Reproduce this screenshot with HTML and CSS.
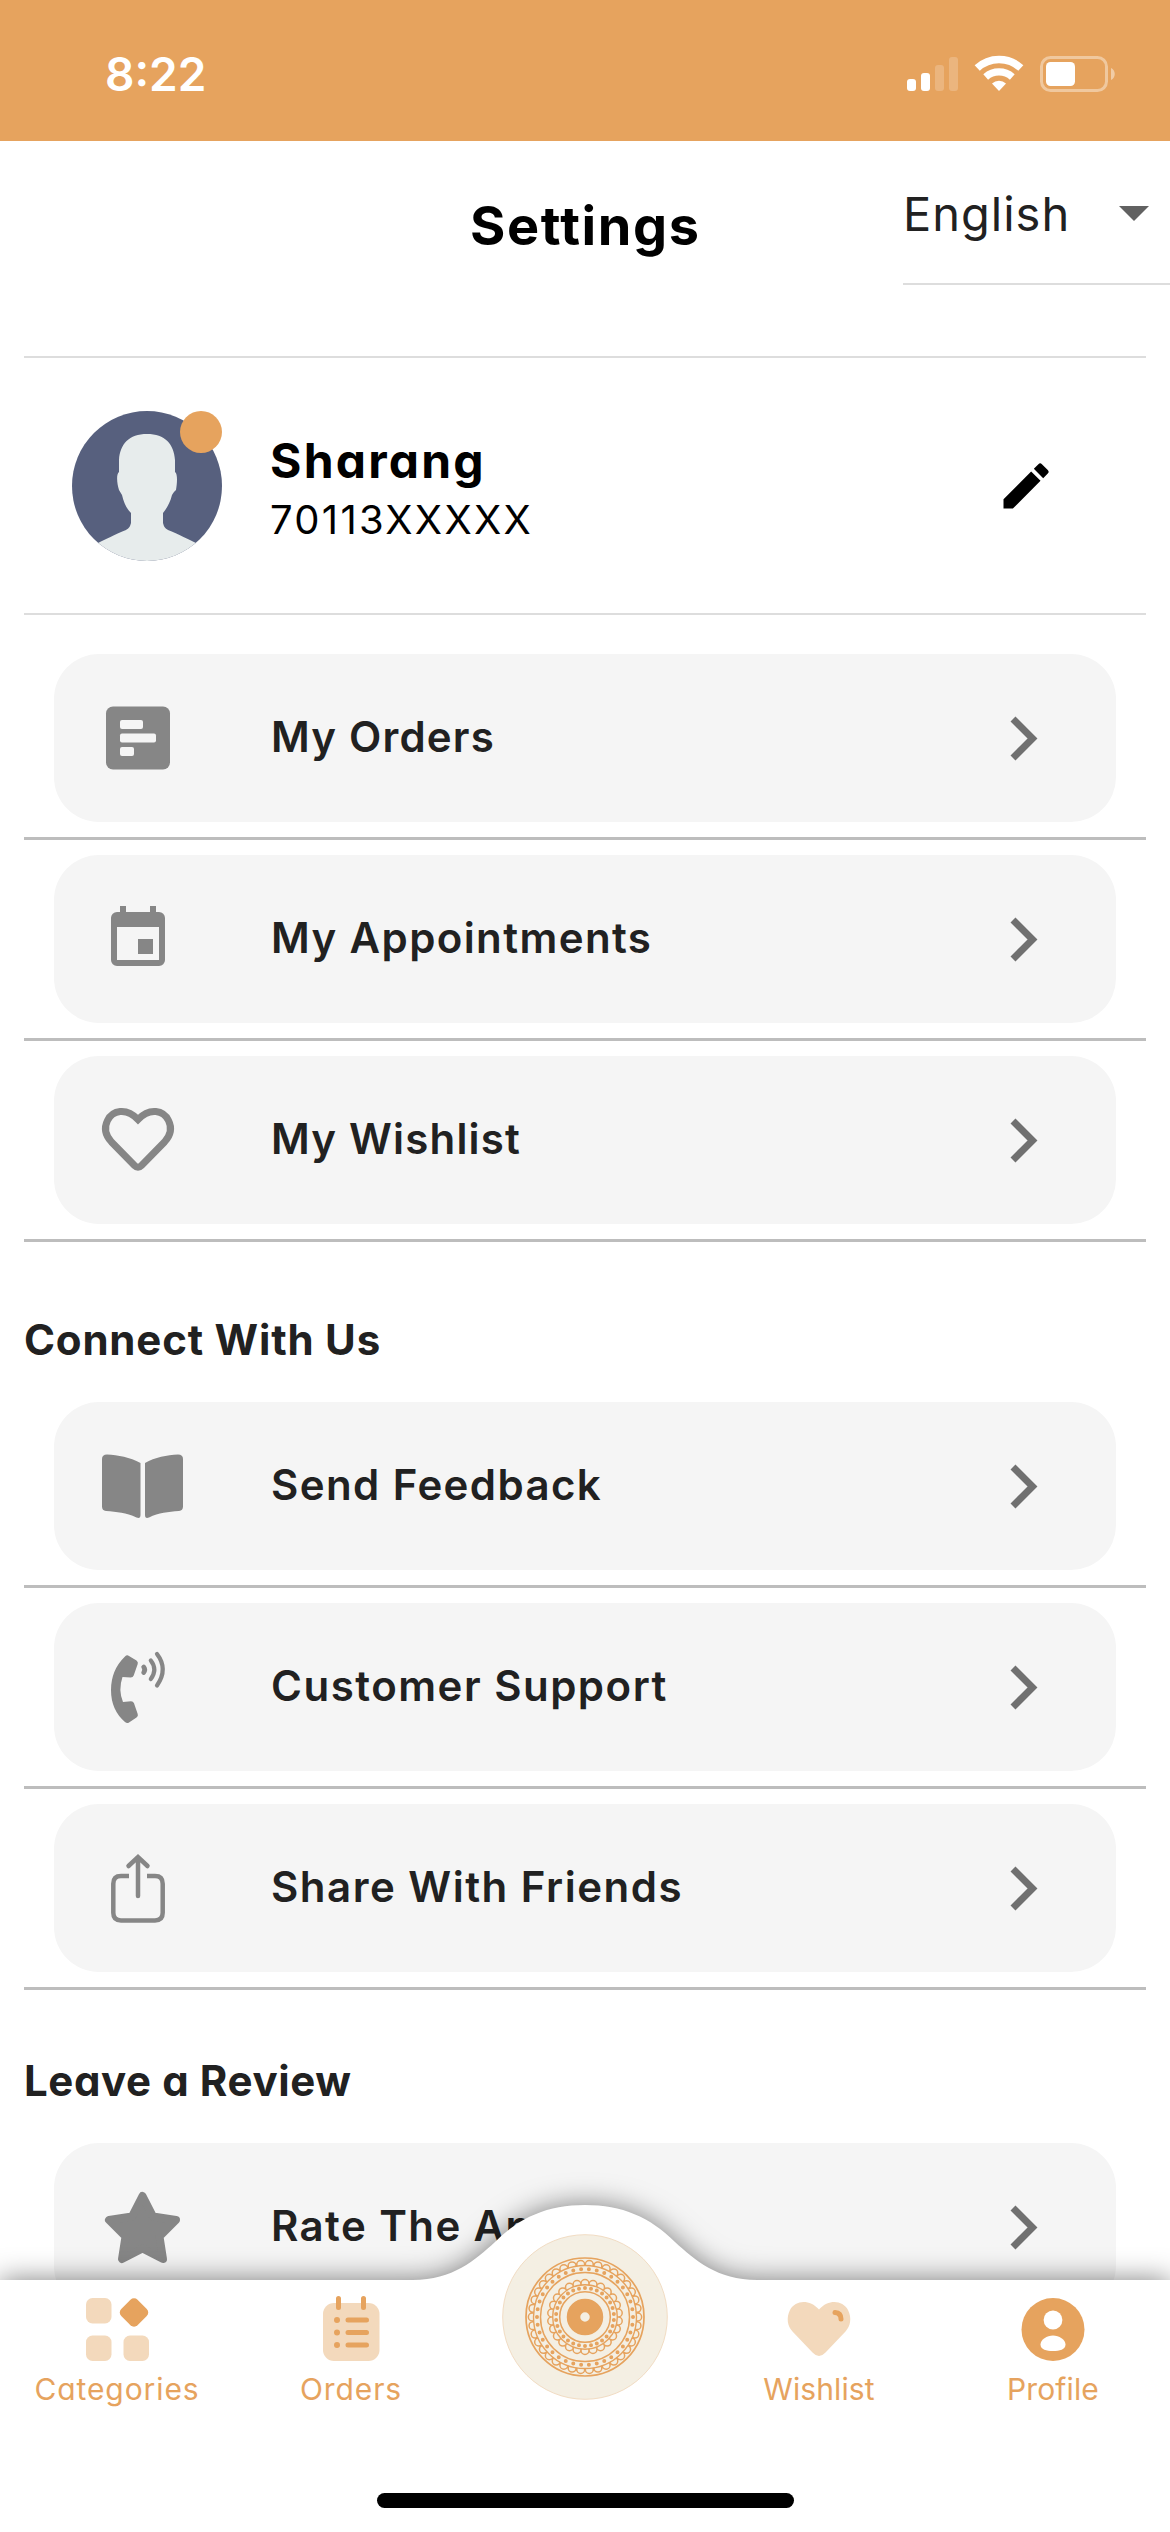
FILE: index.html
```html
<!DOCTYPE html>
<html lang="en">
<head>
<meta charset="utf-8">
<title>Settings</title>
<link rel="stylesheet" href="styles.css">
</head>
<body>
<div class="screen">
  <header class="status-bar">
    <span class="clock">8:22</span>
    <svg class="status-icons" width="208" height="38" viewBox="907 55 208 38">
      <g fill="#fff">
        <rect x="907" y="79" width="9" height="12" rx="3"/>
        <rect x="921" y="73" width="9" height="18" rx="3"/>
        <rect x="935" y="65" width="9" height="26" rx="3" opacity=".2"/>
        <rect x="949" y="57" width="9" height="34" rx="3" opacity=".2"/>
        <path d="M999 91 992 83.500a10.500 10.500 0 0 1 14 0z"/>
        <rect x="1046" y="62" width="29" height="24" rx="4.500"/>
        <path d="M1111 68c5 2 5 10 0 12z" opacity=".45"/>
      </g>
      <g fill="none" stroke="#fff">
        <path d="M985.700 77a20 20 0 0 1 26.600 0" stroke-width="7.200"/>
        <path d="M977.200 68a32 32 0 0 1 43.600 0" stroke-width="7.500"/>
        <rect x="1041.500" y="57.500" width="65" height="33" rx="9" stroke-width="3" opacity=".4"/>
      </g>
    </svg>
  </header>

  <div class="title-bar">
    <h1 class="title">Settings</h1>
    <div class="language">
      <span class="language-name">English</span>
      <span class="caret"></span>
    </div>
  </div>

  <main class="content">
    <section class="profile">
      <div class="avatar">
        <svg width="150" height="150" viewBox="0 0 150 150">
          <clipPath id="face"><circle cx="75" cy="75" r="75"/></clipPath>
          <g clip-path="url(#face)">
            <rect width="150" height="150" fill="#57607e"/>
            <path fill="#e7ecec" d="M75 23c18 0 27 10 28 26v12c3 2 2 12 1 18-2 2-3 3-4 5-2 8-5 13-9 18v10c1 4 2 5 5 7 12 5 20 9 28 13v20H26v-20c8-4 16-8 28-13 3-2 4-3 5-7v-10c-5-5-7-10-9-18-1-2-2-3-3-5-2-6-3-16 0-18V49c1-16 10-26 28-26z"/>
          </g>
        </svg>
        <span class="badge"></span>
      </div>
      <div class="who">
        <div class="name">Sharang</div>
        <div class="phone">70113XXXXX</div>
      </div>
      <svg class="edit" width="60" height="60" viewBox="0 0 24 24"><path d="M3 17.250V21h3.750L17.810 9.940l-3.750-3.750L3 17.250zM20.710 7.040a.996.996 0 0 0 0-1.410l-2.340-2.340a.996.996 0 0 0-1.410 0l-1.830 1.830 3.750 3.750 1.830-1.830z"/></svg>
    </section>

    <ul class="menu menu-main">
      <li class="row"><a class="card">
        <svg class="icon" viewBox="0 0 96 96"><rect x="16" y="16.500" width="64" height="63" rx="7"/><g fill="#f5f5f5"><rect x="30" y="30" width="23" height="9" rx="2"/><rect x="30" y="43.500" width="36" height="9" rx="2"/><rect x="30" y="57" width="14" height="9" rx="2"/></g></svg>
        <span class="label tight">My Orders</span>
        <svg class="chevron" viewBox="0 0 28 45"><path d="M3 3 22.500 22.500 3 42"/></svg>
      </a></li>
      <li class="row"><a class="card">
        <svg class="icon" viewBox="0 0 96 96"><path fill-rule="evenodd" d="M30 15h6v6h24v-6h6v6h3a6 6 0 0 1 6 6v42a6 6 0 0 1-6 6H27a6 6 0 0 1-6-6V27a6 6 0 0 1 6-6h3zM27 36v33h42V36zM48 48h15v15H48z"/></svg>
        <span class="label">My Appointments</span>
        <svg class="chevron" viewBox="0 0 28 45"><path d="M3 3 22.500 22.500 3 42"/></svg>
      </a></li>
      <li class="row"><a class="card">
        <svg class="icon" viewBox="0 0 96 96"><path class="line" stroke-width="7" stroke-linejoin="miter" d="M48 27.500C36 15 22.500 18.500 17.500 28.500c-4 8-1.500 15.500 4 21.500l23 23.500q3.500 3.500 7 0L74.500 50c5.500-6 8-13.500 4-21.500C73.500 18.500 60 15 48 27.500z"/></svg>
        <span class="label tight">My Wishlist</span>
        <svg class="chevron" viewBox="0 0 28 45"><path d="M3 3 22.500 22.500 3 42"/></svg>
      </a></li>
    </ul>

    <h2 class="heading">Connect With Us</h2>
    <ul class="menu">
      <li class="row"><a class="card">
        <svg class="icon" viewBox="0 0 96 96"><path d="M17 16.500c11 .8 23 2.500 33.500 8.500v52q0 4-4 2.500C36 74.500 27 74 16 73q-4-.5-4-4.500V21q0-4.500 5-4.500zM88 16.500c-11 .8-23 2.500-33 8.500v52q0 4 4 2.500C69 74.500 78 74 89 73q4-.5 4-4.500V21q0-4.500-5-4.500z"/></svg>
        <span class="label">Send Feedback</span>
        <svg class="chevron" viewBox="0 0 28 45"><path d="M3 3 22.500 22.500 3 42"/></svg>
      </a></li>
      <li class="row"><a class="card">
        <svg class="icon" viewBox="0 0 96 96"><path d="M35 17.500q2-2 4-.5l7.500 4.500q2 1.500 1.200 3.500l-4 11.500q-.7 2-3 2L32.500 38q-4.500 13 .5 25l8-.8q2.200 0 3 2l3.700 10.800q.8 2-1.200 3.500l-7.500 5q-2 1.300-4-.5Q21 71 21 51t14-33.500z"/><g class="line" stroke-width="4.200"><path d="M53.700 28q2 2.500 0 5.500" stroke-width="4.800"/><path d="M60.800 21.500q7 9 0 18.500"/><path d="M67 15q11.500 15 0 31.500"/></g></svg>
        <span class="label loose">Customer Support</span>
        <svg class="chevron" viewBox="0 0 28 45"><path d="M3 3 22.500 22.500 3 42"/></svg>
      </a></li>
      <li class="row"><a class="card">
        <svg class="icon" viewBox="0 0 96 96"><g class="line" stroke-width="4.500"><path stroke-linecap="butt" d="M39 36H31q-7.700 0-7.700 7.700v29q0 7.700 7.700 7.700h34q7.700 0 7.700-7.700v-29Q72.700 36 65 36h-8"/><path d="M48 56V17.500M38.500 26 48 17l9.500 9"/></g></svg>
        <span class="label loose">Share With Friends</span>
        <svg class="chevron" viewBox="0 0 28 45"><path d="M3 3 22.500 22.500 3 42"/></svg>
      </a></li>
    </ul>

    <h2 class="heading review">Leave a Review</h2>
    <ul class="menu">
      <li class="row"><a class="card">
        <svg class="icon" viewBox="0 0 96 96"><path stroke="#868686" stroke-width="8" stroke-linejoin="round" d="M52.500 17 63 37.500 86 41 69.500 57.500 73 80 52.500 69.500 32 80 35.500 57.500 19 41 42 37.500z"/></svg>
        <span class="label">Rate The App</span>
        <svg class="chevron" viewBox="0 0 28 45"><path d="M3 3 22.500 22.500 3 42"/></svg>
      </a></li>
    </ul>
  </main>

  <nav class="tab-bar">
    <svg class="tab-shape" width="1170" height="327" viewBox="0 0 1170 327"><path d="M0 75H413C453 75 475 55 495 37C520 12 548 0 585 0S650 12 675 37C695 55 717 75 757 75H1170V327H0z"/></svg>
    <div class="tabs">
      <a class="tab">
        <svg width="66" height="66" viewBox="84 2296 66 66">
          <g fill="#f3d9bc"><rect x="86" y="2298" width="25.500" height="25.500" rx="6.500"/><rect x="86" y="2335.500" width="25.500" height="25.500" rx="6.500"/><rect x="123.500" y="2335.500" width="25.500" height="25.500" rx="6.500"/></g>
          <rect x="122.500" y="2301" width="23" height="23" rx="5" fill="#e6a35e" transform="rotate(45 134 2312.500)"/>
        </svg>
        <span class="tab-label wide">Categories</span>
      </a>
      <a class="tab">
        <svg width="66" height="66" viewBox="318.500 2296 66 66">
          <rect x="323.500" y="2303" width="56.500" height="58" rx="11" fill="#f3d9bc"/>
          <g stroke="#e6a35e" stroke-width="5" stroke-linecap="round"><path d="M339 2298.500v9M364 2298.500v9M348.500 2320h18.500M348.500 2332.500h18.500M348.500 2345h18.500"/><path stroke-width="6" d="M337.500 2320h0M337.500 2332.500h0M337.500 2345h0"/></g>
        </svg>
        <span class="tab-label wide">Orders</span>
      </a>
      <a class="tab center-tab">
        <svg width="166" height="166" viewBox="-83 -83 166 166">
          <circle r="82.300" fill="#f4efe3" stroke="#f1dcc3"/>
          <g fill="none" stroke-linecap="round">
            <circle r="59" stroke="#e6a35e" stroke-width="1.700"/>
            <circle r="52.700" stroke="#e6a35e" stroke-width="9.400" pathLength="38" stroke-dasharray="0 1"/>
            <circle r="52.700" stroke="#f4efe3" stroke-width="6.400" pathLength="38" stroke-dasharray="0 1"/>
            <circle r="51.500" fill="#f4efe3" stroke="#e6a35e" stroke-width="1.400"/>
            <circle r="48" stroke="#e6a35e" stroke-width="4" pathLength="38" stroke-dasharray="0 1"/>
            <circle r="44.500" stroke="#e6a35e" stroke-width="1.500"/>
            <circle r="33.500" stroke="#e6a35e" stroke-width="9.400" pathLength="26" stroke-dasharray="0 1" transform="rotate(-90)"/>
            <circle r="33.500" stroke="#f4efe3" stroke-width="6.400" pathLength="26" stroke-dasharray="0 1" transform="rotate(-90)"/>
            <circle r="32.300" fill="#f4efe3" stroke="#e6a35e" stroke-width="1.400"/>
            <circle r="29" stroke="#e6a35e" stroke-width="4" pathLength="30" stroke-dasharray="0 1" transform="rotate(-90)"/>
            <circle r="25.300" stroke="#e6a35e" stroke-width="1.500"/>
            <circle r="11.500" stroke="#e6a35e" stroke-width="13.500"/>
          </g>
        </svg>
      </a>
      <a class="tab">
        <svg width="66" height="66" viewBox="786.500 2296 66 66">
          <path fill="#f3d9bc" d="M819.500 2309.500C810 2299 796 2300 790.500 2310c-4 8-2.500 16 2.500 21.500l20 21q6.500 7 13 0l20-21c5-5.500 6.500-13.500 2.500-21.500-5.500-10-19.500-11-29-.5z"/>
          <path d="M835.500 2312.500q6 .5 6 6.500" fill="none" stroke="#e6a35e" stroke-width="5" stroke-linecap="round"/>
        </svg>
        <span class="tab-label">Wishlist</span>
      </a>
      <a class="tab">
        <svg width="66" height="66" viewBox="1020.500 2296 66 66">
          <circle cx="1053.500" cy="2329.500" r="31.500" fill="#e6a35e"/>
          <circle cx="1053.500" cy="2320" r="9.400" fill="#fff"/>
          <path fill="#fff" d="M1053.500 2335.500c6 0 12.500 4 12.500 9s-6 6.500-12.500 6.500-12.500-1.500-12.500-6.500 6.500-9 12.500-9z"/>
        </svg>
        <span class="tab-label">Profile</span>
      </a>
    </div>
    <div class="home-indicator"></div>
  </nav>
</div>
</body>
</html>
```
FILE: styles.css
```css
* { box-sizing: border-box; margin: 0; padding: 0; }

body {
  background: #fff;
  font-family: Inter, "Liberation Sans", sans-serif;
  color: #212121;
}

.screen {
  position: relative;
  display: flex;
  flex-direction: column;
  width: 1170px;
  height: 2532px;
  overflow: hidden;
}

svg { display: block; flex: none; }

.status-bar {
  display: flex;
  flex: none;
  align-items: flex-start;
  justify-content: space-between;
  height: 141px;
  padding: 55px 55px 0 105px;
  background: #e6a35e;
}

.clock {
  color: #fff;
  font-size: 46px;
  font-weight: 600;
  line-height: 38px;
}

.title-bar {
  display: grid;
  grid-template-columns: 903px 267px;
  flex: none;
  height: 215px;
  font-feature-settings: "cv11";
}

.title {
  padding: 55px 0 0 470px;
  color: #000;
  font-size: 54px;
  font-weight: 700;
  letter-spacing: 1.6px;
  line-height: 60px;
}

.language {
  display: flex;
  align-items: flex-start;
  justify-content: space-between;
  height: 144px;
  padding: 43px 21px 0 0;
  border-bottom: 2px solid #ddd;
}

.language-name {
  font-size: 47px;
  letter-spacing: 1px;
  line-height: 60px;
}

.caret {
  margin-top: 22px;
  border: 15px solid transparent;
  border-top-color: #616161;
  border-bottom-width: 0;
}

.content {
  display: flex;
  flex-direction: column;
  padding: 0 24px;
}

.profile {
  display: flex;
  align-items: center;
  height: 259px;
  padding: 0 90px 0 48px;
  border-top: 2px solid #ddd;
  border-bottom: 2px solid #ddd;
  color: #000;
}

.avatar {
  position: relative;
  width: 150px;
  height: 150px;
}

.badge {
  position: absolute;
  top: 0;
  right: 0;
  width: 42px;
  height: 42px;
  border-radius: 50%;
  background: #e6a35e;
}

.who {
  flex: 1;
  padding: 9px 0 0 48px;
  font-feature-settings: "cv11";
}

.name {
  font-size: 48px;
  font-weight: 700;
  letter-spacing: 2.2px;
  line-height: 59px;
}

.phone {
  font-size: 40px;
  letter-spacing: 2.3px;
  line-height: 60px;
}

.menu {
  display: flex;
  flex-direction: column;
  gap: 15px;
  list-style: none;
}

.menu-main { margin-top: 39px; }

.row {
  padding: 0 30px 15px;
  border-bottom: 3px solid #bdbdbd;
}

.card {
  display: flex;
  align-items: center;
  height: 168px;
  padding: 0 78px 0 36px;
  border-radius: 45px;
  background: #f5f5f5;
}

.icon {
  width: 96px;
  height: 96px;
  fill: #868686;
}

.icon .line {
  fill: none;
  stroke: #868686;
  stroke-linecap: round;
}

.label {
  flex: 1;
  padding: 0 0 2px 85px;
  font-size: 42px;
  font-weight: 600;
  letter-spacing: 1.4px;
  line-height: 50px;
  white-space: nowrap;
}

.label.tight { letter-spacing: 1.2px; }

.label.loose { letter-spacing: 1.5px; }

.chevron {
  width: 28px;
  height: 45px;
  fill: none;
  stroke: #707070;
  stroke-width: 7px;
}

.heading {
  height: 160px;
  padding-top: 68px;
  font-size: 42px;
  font-weight: 700;
  letter-spacing: .8px;
  line-height: 60px;
  font-feature-settings: "cv11";
}

.heading.review {
  height: 153px;
  padding-top: 61px;
  letter-spacing: .6px;
}

.tab-bar {
  position: absolute;
  left: 0;
  bottom: 0;
  width: 1170px;
  height: 327px;
}

.tab-shape {
  position: absolute;
  inset: 0;
  overflow: visible;
  fill: #fff;
  filter: drop-shadow(0 0 14px rgba(0, 0, 0, .5));
}

.tabs {
  position: relative;
  display: grid;
  grid-template-columns: repeat(5, 234px);
  height: 288px;
}

.tab {
  display: flex;
  flex-direction: column;
  align-items: center;
  padding-top: 91px;
  color: #e6a35e;
}

.center-tab { padding-top: 29px; }

.tab-label {
  margin-top: 9px;
  font-size: 30px;
  letter-spacing: .1px;
  line-height: 36px;
  font-feature-settings: "cv11";
}

.tab-label.wide { letter-spacing: .9px; }

.home-indicator {
  position: relative;
  width: 417px;
  height: 15px;
  margin: 0 auto;
  border-radius: 8px;
  background: #000;
}
```
